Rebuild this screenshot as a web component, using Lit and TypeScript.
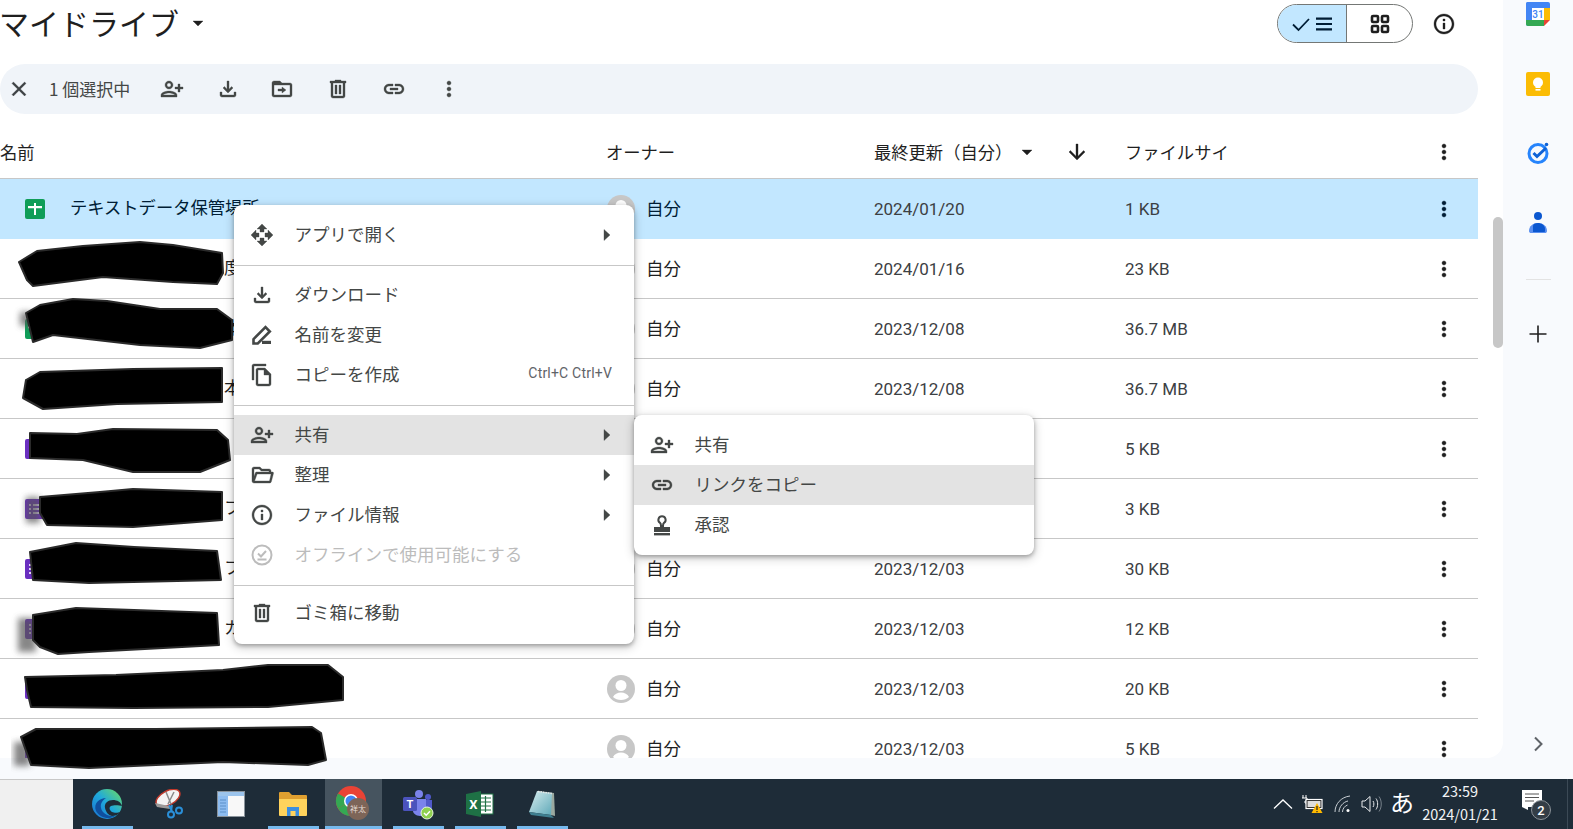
import { LitElement, css, html, svg } from 'lit';
import { customElement } from 'lit/decorators.js';

// material style icon paths
const P = {
  close: 'M19 6.41 17.59 5 12 10.59 6.41 5 5 6.41 10.59 12 5 17.59 6.41 19 12 13.41 17.59 19 19 17.59 13.41 12z',
  personAdd: 'M9 12c2.21 0 4-1.79 4-4s-1.79-4-4-4-4 1.79-4 4 1.79 4 4 4zm0-6c1.1 0 2 .9 2 2s-.9 2-2 2-2-.9-2-2 .9-2 2-2zm0 8c-2.67 0-8 1.34-8 4v2h16v-2c0-2.66-5.33-4-8-4zm6 4H3c.2-.71 3.3-2 6-2 2.69 0 5.78 1.28 6 2zm3-3v-3h-3v-2h3V7h2v3h3v2h-3v3h-2z',
  download: 'M18 15v3H6v-3H4v3c0 1.1.9 2 2 2h12c1.1 0 2-.9 2-2v-3h-2zm-1-4-1.41-1.41L13 12.17V4h-2v8.17L8.41 9.59 7 11l5 5 5-5z',
  move: 'M19 6h-8L9 4H3c-1.1 0-2 .9-2 2v12c0 1.1.9 2 2 2h16c1.1 0 2-.9 2-2V8c0-1.1-.9-2-2-2zm0 12H3V8h16v10zm-8-2 4-3-4-3v2H7v2h4z',
  trash: 'M15 4V3H9v1H4v2h1v13c0 1.1.9 2 2 2h10c1.1 0 2-.9 2-2V6h1V4h-5zm2 15H7V6h10v13zM9 8h2v9H9zm4 0h2v9h-2z',
  link: 'M17 7h-4v2h4c1.65 0 3 1.35 3 3s-1.35 3-3 3h-4v2h4c2.76 0 5-2.24 5-5s-2.24-5-5-5zm-6 8H7c-1.65 0-3-1.35-3-3s1.35-3 3-3h4V7H7c-2.76 0-5 2.24-5 5s2.24 5 5 5h4v-2zm-3-4h8v2H8z',
  more: 'M12 8c1.1 0 2-.9 2-2s-.9-2-2-2-2 .9-2 2 .9 2 2 2zm0 2c-1.1 0-2 .9-2 2s.9 2 2 2 2-.9 2-2-.9-2-2-2zm0 6c-1.1 0-2 .9-2 2s.9 2 2 2 2-.9 2-2-.9-2-2-2z',
  openWith: 'M10 9h4V6h3l-5-5-5 5h3v3zm-1 1H6V7l-5 5 5 5v-3h3v-4zm14 2-5-5v3h-3v4h3v3l5-5zm-9 3h-4v3H7l5 5 5-5h-3v-3z',
  copy: 'M16 1H4c-1.1 0-2 .9-2 2v14h2V3h12V1zm-1 4H8c-1.1 0-2 .9-2 2v14c0 1.1.9 2 2 2h11c1.1 0 2-.9 2-2V11l-6-6zM8 21V7h6v5h5v9H8z',
  folderOpen: 'M4 4h6l2 2h7c1.1 0 2 .9 2 2v1h1.5c.7 0 1.2.7 1 1.3l-2.2 8.4c-.2.8-.9 1.3-1.7 1.3H4c-1.1 0-2-.9-2-2V6c0-1.1.9-2 2-2zm0 2v7.5L5.5 9.6C5.7 9.2 6 9 6.4 9H19V8h-7.8l-2-2H4zm3.1 5L4.6 18h14.9l1.6-7z',
  info: 'M11 7h2v2h-2zm0 4h2v6h-2zm1-9C6.48 2 2 6.48 2 12s4.48 10 10 10 10-4.48 10-10S17.52 2 12 2zm0 18c-4.41 0-8-3.59-8-8s3.59-8 8-8 8 3.59 8 8-3.59 8-8 8z',
  caret: 'M7 10l5 5 5-5z',
  arrowDown: 'M20 12l-1.41-1.41L13 16.17V4h-2v12.17l-5.58-5.59L4 12l8 8 8-8z',
  right: 'M9 6.500v11l6-5.500z',
};

const icon = (d: string, size = 24) => html`<svg class="ic" width=${size} height=${size} viewBox="0 0 24 24"><path d=${d} fill="currentColor" fill-rule="evenodd" stroke="currentColor" stroke-width=".35"></path></svg>`;

const renameIcon = html`<svg class="ic" width="24" height="24" viewBox="0 0 24 24"><path d="M3.500 20.500v-4.300L15.500 4.200l4.300 4.300L7.800 20.500z" fill="none" stroke="currentColor" stroke-width="2.600"></path><rect x="12" y="17.800" width="9" height="3.200" fill="currentColor"></rect></svg>`;
const offlineIcon = html`<svg class="ic" width="24" height="24" viewBox="0 0 24 24" fill="none" stroke="currentColor" stroke-width="2"><circle cx="12" cy="12" r="9.500"></circle><path d="M8 10.500l3 3 5-5.500M7.500 16.500h9"></path></svg>`;
const stampIcon = html`<svg class="ic" width="24" height="24" viewBox="0 0 24 24"><path d="M12 3.200a3.600 3.600 0 0 0-2 6.600c.6.5 1 1.600 1 3.200h2c0-1.600.4-2.700 1-3.200a3.600 3.600 0 0 0-2-6.600z" fill="none" stroke="currentColor" stroke-width="2"></path><rect x="4" y="14" width="16" height="5" fill="currentColor"></rect><rect x="4" y="20" width="16" height="2.400" fill="currentColor"></rect></svg>`;
const avatar = html`<svg class="avatar" width="28" height="28" viewBox="0 0 28 28"><circle cx="14" cy="14" r="14" fill="#c7c7c7"></circle><circle cx="14" cy="10.500" r="5.500" fill="#fff"></circle><path d="M6 22c1.500-3 4.500-4.500 8-4.500s6.500 1.500 8 4.500c-2 2-5 3-8 3s-6-1-8-3z" fill="#fff"></path></svg>`;
const sheetIcon = html`<svg width="20" height="20" viewBox="0 0 20 20"><rect width="20" height="20" rx="2" fill="#0f9d58"></rect><path d="M9 4h2v3h6v2.200h-6V16H9V9.200H3V7h6z" fill="#fff"></path></svg>`;
const formIcon = html`<svg width="20" height="20" viewBox="0 0 20 20"><rect width="20" height="20" rx="2" fill="#6a2fc0"></rect><path d="M4 5h2v2H4zM8 5h8v2H8zM4 9h2v2H4zM8 9h8v2H8zM4 13h2v2H4zM8 13h8v2H8z" fill="#e0d4f5"></path></svg>`;

interface Row { kind: 'sheet' | 'form'; name?: string; tail?: string; date: string; size: string; }
const rows: Row[] = [
  { kind: 'sheet', name: 'テキストデータ保管場所', date: '2024/01/20', size: '1 KB' },
  { kind: 'sheet', tail: '度', date: '2024/01/16', size: '23 KB' },
  { kind: 'sheet', tail: '本', date: '2023/12/08', size: '36.7 MB' },
  { kind: 'sheet', tail: '本', date: '2023/12/08', size: '36.7 MB' },
  { kind: 'form', date: '2023/12/03', size: '5 KB' },
  { kind: 'form', tail: 'フ', date: '2023/12/03', size: '3 KB' },
  { kind: 'form', tail: 'フ', date: '2023/12/03', size: '30 KB' },
  { kind: 'form', tail: 'カ', date: '2023/12/03', size: '12 KB' },
  { kind: 'form', date: '2023/12/03', size: '20 KB' },
  { kind: 'form', date: '2023/12/03', size: '5 KB' },
];

// marker strokes over the file names, traced from the screenshot
const scribbles = [
  '19,262 37,251 83,246 140,242 173,245 222,253 223,273 217,284 173,282 103,277 33,286 27,280',
  '26,313 40,305 73,299 107,301 160,309 217,309 232,320 232,340 200,348 140,345 53,335 33,342',
  '26,380 40,372 133,369 222,368 222,402 117,404 43,409 23,398',
  '30,433 77,434 113,429 217,430 228,440 230,460 200,472 133,472 83,460 30,458',
  '40,497 100,492 133,489 222,492 222,520 133,527 47,525 40,513',
  '30,552 76,543 134,547 217,551 221,580 89,583 33,580',
  '33,615 76,608 134,610 217,613 219,645 89,652 58,654 40,647 33,640',
  '25,677 116,675 223,670 268,665 328,665 343,677 343,700 268,707 134,708 31,707 27,690',
  '21,737 36,729 156,729 312,727 321,733 326,760 308,765 223,762 89,768 31,765',
];

@customElement('app-root')
export class AppRoot extends LitElement {
  static override styles = css`
    :host {
      display: block;
      position: relative;
      width: 100%;
      height: 829px;
      overflow: hidden;
      background: #f8fafd;
      color: #1f1f1f;
      font-family: 'Noto Sans CJK JP', Roboto, sans-serif;
      font-size: 17.300px;
    }
    .ic { display: block; flex: none; }
    .window { display: flex; height: 779px; }
    .main {
      position: relative;
      width: 1503px;
      height: 758px;
      flex: none;
      overflow: hidden;
      background: #fff;
      border-bottom-right-radius: 16px;
    }
    .content { width: 1478px; }
    .top { display: flex; height: 64px; padding-right: 22px; box-sizing: border-box; width: 1478px; }
    .title { font-size: 30px; line-height: 44px; white-space: nowrap; margin-left: -1px; }
    .title-caret { margin: 11px 0 0 7px; color: #1f1f1f; }
    .toggle {
      display: flex;
      margin: 4px 0 0 auto;
      width: 136px;
      height: 39px;
      box-sizing: border-box;
      border: 1px solid #747775;
      border-radius: 20px;
      overflow: hidden;
    }
    .toggle .on {
      width: 68px;
      flex: none;
      display: flex;
      align-items: center;
      justify-content: center;
      gap: 3px;
      background: #c2e7ff;
      border-right: 1px solid #747775;
      color: #001d35;
    }
    .toggle .off { flex: 1; display: flex; align-items: center; justify-content: center; color: #1f1f1f; }
    .info { margin: 12px 0 0 19px; color: #1f1f1f; }
    .toolbar {
      display: flex;
      align-items: center;
      height: 50px;
      border-radius: 25px;
      background: #f0f4f9;
      color: #444746;
    }
    .toolbar .x { margin-left: 7px; color: #3c4043; }
    .toolbar .count { margin-left: 18px; width: 95.500px; white-space: nowrap; font-size: 17px; padding-bottom: 2px; }
    .tool { width: 55.400px; flex: none; display: flex; justify-content: center; }
    .grid { display: grid; grid-template-columns: 606px 268px 251px 285px 68px; align-items: center; }
    .head { height: 53px; padding-top: 11px; border-bottom: 1px solid #c7c7c7; color: #1f1f1f; }
    .head .sort { display: flex; align-items: center; white-space: nowrap; }
    .head .caret { margin-left: 3px; }
    .head .arrow { margin-left: 26px; }
    .head .menu-col { display: flex; justify-content: center; }
    .row { height: 59px; border-bottom: 1px solid #c7c7c7; color: #1f1f1f; }
    .row.sel { background: #c2e7ff; border-bottom-color: #c2e7ff; color: #001d35; }
    .name { display: flex; align-items: center; gap: 25px; padding-left: 25px; white-space: nowrap; }
    .name svg { flex: none; }
    .name span { padding-bottom: 4px; }
    .tail { margin-left: 154px; }
    .owner { display: flex; align-items: center; gap: 11px; padding-left: 1px; }
    .owner span { padding-bottom: 3px; font-size: 17.500px; }
    .avatar { display: block; flex: none; }
    .date, .size { font-family: Roboto, 'Noto Sans CJK JP', sans-serif; font-size: 17px; color: #3c4043; }
    .dots { display: flex; justify-content: center; }
    .scroll { position: absolute; left: 1493px; top: 217px; width: 10px; height: 131px; border-radius: 5px; background: #c7c7c7; }

    .side { flex: 1; position: relative; display: flex; flex-direction: column; align-items: center; }
    .side .cal { margin-top: 2px; height: 24px; }
    .side .keep { margin-top: 46px; height: 24px; }
    .side .tasks { margin-top: 45px; height: 24px; }
    .side .contacts { margin-top: 46px; height: 24px; }
    .side .rule { margin-top: 44px; width: 25px; height: 1px; background: #e3e3e3; }
    .side .plus { margin-top: 42px; color: #1f1f1f; }
    .side .chev { margin-top: auto; margin-bottom: 23px; color: #5f6368; }

    .scribble { position: absolute; left: 0; top: 0; width: 1573px; height: 829px; pointer-events: none; }

    .menu {
      position: absolute;
      width: 400px;
      box-sizing: border-box;
      padding: 10px 0;
      background: #fff;
      border-radius: 8px;
      box-shadow: 0 2px 4px rgba(0, 0, 0, .3), 0 3px 10px 2px rgba(0, 0, 0, .14);
      color: #444746;
      font-size: 17.500px;
    }
    .menu.main-menu { left: 234px; top: 205px; height: 439px; }
    .menu.sub { left: 634px; top: 415px; height: 140px; }
    .item { display: flex; align-items: center; height: 40px; padding-left: 16px; white-space: nowrap; }
    .item.hl { background: #e3e3e3; }
    .item.off { color: #bcbcbc; }
    .item .lbl { margin-left: 20.500px; padding-bottom: 4px; }
    .item .sc { margin-left: auto; margin-right: 22px; padding-bottom: 4px; font-family: Roboto, sans-serif; font-size: 14px; color: #5f6368; letter-spacing: .2px; }
    .item .arr { margin-left: auto; margin-right: 15px; color: #444746; }
    .sep { height: 1px; background: #c7c7c7; margin: 10px 0 9px; }
    .sep.last { margin: 10px 0 7px; }

    .taskbar { display: flex; height: 50px; background: #1e2c38; color: #fff; }
    .start { width: 73px; flex: none; background: #f0f0f0; border-top: 1px solid #c8c8c8; box-sizing: border-box; }
    .apps { display: flex; padding-left: 3px; }
    .slot { position: relative; width: 62px; flex: none; display: flex; align-items: center; justify-content: center; }
    .slot.run::after { content: ''; position: absolute; left: 6px; right: 5px; bottom: 0; height: 3px; background: #76b9ed; }
    .slot.active { background: #46545f; width: 57px; margin: 0 5px 0 1px; }
    .slot.active::after { left: 0; right: 0; }
    .tray { margin: 0 5px 0 auto; display: flex; align-items: center; padding-right: 16px; border-right: 1px solid #3c4a56; }
    .tray svg { display: block; flex: none; }
    .ime { width: 28px; margin-left: 5px; padding-bottom: 4px; text-align: center; font-size: 24px; line-height: 1; }
    .clock { margin-left: -1px; width: 90px; padding-bottom: 4px; text-align: center; font-size: 14.500px; line-height: 23px; color: #f2f4f6; }
    .notify { margin-left: 14px; }
  `;

  private item(ic: unknown, label: string, opts: { arrow?: boolean; hl?: boolean; off?: boolean; sc?: string } = {}) {
    return html`<div class="item ${opts.hl ? 'hl' : ''} ${opts.off ? 'off' : ''}">
      ${ic}<span class="lbl">${label}</span>
      ${opts.sc ? html`<span class="sc">${opts.sc}</span>` : ''}
      ${opts.arrow ? html`<span class="arr">${icon(P.right, 24)}</span>` : ''}
    </div>`;
  }

  private renderSide() {
    return html`<aside class="side">
      <svg class="cal" width="24" height="24" viewBox="0 0 24 24">
        <rect width="24" height="24" rx="2" fill="#fff"></rect>
        <path d="M0 2a2 2 0 0 1 2-2h4v24H2a2 2 0 0 1-2-2z" fill="#4285f4"></path>
        <path d="M2 0h20a2 2 0 0 1 2 2v4H0V2a2 2 0 0 1 2-2z" fill="#4285f4"></path>
        <path d="M18 6h6v12h-6z" fill="#fbbc04"></path>
        <path d="M0 18h18v6H2a2 2 0 0 1-2-2z" fill="#34a853"></path>
        <path d="M18 18h6l-6 6z" fill="#ea4335"></path>
        <text x="12" y="16" text-anchor="middle" font-family="Roboto, sans-serif" font-size="10" font-weight="500" fill="#4285f4">31</text>
      </svg>
      <svg class="keep" width="24" height="24" viewBox="0 0 24 24">
        <rect width="24" height="24" rx="2" fill="#fbbc04"></rect>
        <circle cx="12" cy="10.500" r="5" fill="#fff"></circle>
        <rect x="9.500" y="13" width="5" height="3" fill="#fff"></rect>
        <rect x="9.500" y="17" width="5" height="1.600" fill="#fff"></rect>
      </svg>
      <svg class="tasks" width="24" height="24" viewBox="0 0 24 24">
        <circle cx="12" cy="12.500" r="9" fill="none" stroke="#2684fc" stroke-width="3"></circle>
        <path d="M7.500 12l3.500 3.500 9-8.500" fill="none" stroke="#0f62d6" stroke-width="3"></path>
        <circle cx="20.500" cy="3.500" r="1.800" fill="#0f62d6"></circle>
      </svg>
      <svg class="contacts" width="24" height="24" viewBox="0 0 24 24">
        <circle cx="12" cy="5" r="4" fill="#0b57d0"></circle>
        <path d="M3 20c0-5 4-8 9-8s9 3 9 8c0 1.500-1 2-2 2H5c-1 0-2-.5-2-2z" fill="#5a8ff0"></path>
        <path d="M7 21v-6c0-2 2-3 5-3s7 2 7 6v2c0 .6-.5 1-1 1z" fill="#0b57d0"></path>
      </svg>
      <div class="rule"></div>
      <svg class="plus" width="24" height="24" viewBox="0 0 24 24"><path d="M11.200 3.500h1.600v7.700h7.700v1.600h-7.700v7.700h-1.600v-7.700H3.500v-1.600h7.700z" fill="currentColor"></path></svg>
      <svg class="chev" width="24" height="24" viewBox="0 0 24 24"><path d="M9 5.500l6.500 6.500L9 18.500" fill="none" stroke="currentColor" stroke-width="2"></path></svg>
    </aside>`;
  }

  private renderTaskbar() {
    return html`<footer class="taskbar">
      <div class="start"></div>
      <div class="apps">
        <div class="slot run">
          <svg width="32" height="32" viewBox="0 0 32 32">
            <defs>
              <linearGradient id="eg" x1="0" y1="1" x2="1" y2="0"><stop offset="0" stop-color="#1b6fd0"></stop><stop offset=".5" stop-color="#1fa9dc"></stop><stop offset="1" stop-color="#6fdc5e"></stop></linearGradient>
            </defs>
            <circle cx="16" cy="16" r="15" fill="url(#eg)"></circle>
            <path d="M5 23C2 15 9 10 15 10c-3 2-6 5-5 10 1 5 7 9 14 8-6 4-15 2-19-5z" fill="#0f4f9e"></path>
            <path d="M14 20c-1-5 3-8 8-8 4 0 8 2 9 6-3-1-9-1-11 0-2 1-2 4 1 6 2 1 6 1 8 0-2 3-5 4-8 4-4-1-6-4-7-8z" fill="#1e2c38"></path>
          </svg>
        </div>
        <div class="slot">
          <svg width="30" height="30" viewBox="0 0 30 30">
            <ellipse cx="14" cy="9" rx="13" ry="7" transform="rotate(-28 14 9)" fill="#f3f3f3" stroke="#c0392b" stroke-width="1.500"></ellipse>
            <path d="M12 3l5 12M20 3l-6 12" stroke="#8a8a8a" stroke-width="1.500"></path>
            <path d="M1 14l14 3 1 3-13-2z" fill="#9a9a9a"></path>
            <path d="M15 16l3 6M18 16l-1 6" stroke="#2a8fd8" stroke-width="2"></path>
            <circle cx="17" cy="25.500" r="3" fill="none" stroke="#2a8fd8" stroke-width="2"></circle>
            <circle cx="25" cy="21.500" r="3" fill="none" stroke="#2a8fd8" stroke-width="2"></circle>
          </svg>
        </div>
        <div class="slot">
          <svg width="28" height="26" viewBox="0 0 28 26">
            <rect x="0.500" y="0.500" width="27" height="25" fill="#f8f8f8" stroke="#8a939b"></rect>
            <rect x="1" y="1" width="26" height="4" fill="#9cc4ec"></rect>
            <rect x="1" y="5" width="10" height="20" fill="#8dbcf0"></rect>
            <path d="M3 9h6M3 12h6M3 15h6M3 18h6M3 21h6" stroke="#5b8fc8" stroke-width="1"></path>
          </svg>
        </div>
        <div class="slot run">
          <svg width="28" height="24" viewBox="0 0 28 24">
            <path d="M0 1a1 1 0 0 1 1-1h9l3 3h14a1 1 0 0 1 1 1v4H0z" fill="#e0a030"></path>
            <path d="M0 7h28v16a1 1 0 0 1-1 1H1a1 1 0 0 1-1-1z" fill="#ffd35c"></path>
            <path d="M8 24v-9h12v9h-3.500v-5h-5v5z" fill="#3d8fe0"></path>
          </svg>
        </div>
        <div class="slot run active">
          <svg width="38" height="36" viewBox="0 0 38 36">
            <circle cx="16" cy="15" r="15" fill="#ea4335"></circle>
            <path d="M16 15L3 22.500A15 15 0 0 0 16 30z" fill="#34a853"></path>
            <path d="M16 15V30A15 15 0 0 0 31 15z" fill="#fbbc04"></path>
            <path d="M3 22.500A15 15 0 0 1 3 7.500l13 7.500z" fill="#34a853"></path>
            <circle cx="16" cy="15" r="7" fill="#fff"></circle>
            <circle cx="16" cy="15" r="5.500" fill="#4285f4"></circle>
            <circle cx="23" cy="23" r="11" fill="#7d6558"></circle>
            <text x="23" y="26" text-anchor="middle" font-size="8" fill="#e6dcd4">祥太</text>
          </svg>
        </div>
        <div class="slot run">
          <svg width="32" height="32" viewBox="0 0 32 32">
            <circle cx="17" cy="6" r="4" fill="#7b83eb"></circle>
            <circle cx="26" cy="9" r="3" fill="#5059c9"></circle>
            <path d="M20 12h10v10c0 3-2 5-5 5s-5-2-5-5z" fill="#5059c9"></path>
            <path d="M11 11h13v12c0 3-2 5-6 5s-7-3-7-5z" fill="#7b83eb"></path>
            <rect x="1" y="9" width="14" height="14" rx="1.500" fill="#4b53bc"></rect>
            <text x="8" y="20" text-anchor="middle" font-family="Roboto, sans-serif" font-size="11" font-weight="700" fill="#fff">T</text>
            <circle cx="25" cy="25" r="6" fill="#8fd14f" stroke="#e8f5dc" stroke-width="1"></circle>
            <path d="M22 25l2.200 2.200 3.800-4" fill="none" stroke="#fff" stroke-width="1.500"></path>
          </svg>
        </div>
        <div class="slot run">
          <svg width="28" height="26" viewBox="0 0 28 26">
            <rect x="12" y="3" width="15" height="20" fill="#fff" stroke="#1e7145"></rect>
            <path d="M14 7h11M14 11h11M14 15h11M14 19h11M19.500 5v16" stroke="#1e7145" stroke-width="1.200"></path>
            <path d="M0 3l15-3v26L0 23z" fill="#1e7145"></path>
            <text x="7.500" y="18" text-anchor="middle" font-family="Roboto, sans-serif" font-size="13" font-weight="700" fill="#fff">X</text>
          </svg>
        </div>
        <div class="slot run">
          <svg width="28" height="28" viewBox="0 0 28 28">
            <defs><linearGradient id="np" x1="0" y1="0" x2="1" y2="1"><stop offset="0" stop-color="#d8eef0"></stop><stop offset="1" stop-color="#5fa9b8"></stop></linearGradient></defs>
            <path d="M9 1l17 2 1 23-4-1z" fill="#9aa9a0"></path>
            <path d="M9 1l15 2-1 22L1 22z" fill="url(#np)"></path>
            <path d="M1 22l22 3 3 3L3 25z" fill="#3f7f90"></path>
            <path d="M10 1.500l14 2" stroke="#e8e8e8" stroke-width="1.500" stroke-dasharray="1.500 1"></path>
          </svg>
        </div>
      </div>
      <div class="tray">
        <svg width="20" height="12" viewBox="0 0 20 12"><path d="M1 10.500L10 2l9 8.500" fill="none" stroke="#fff" stroke-width="1.300"></path></svg>
        <svg style="margin-left:9px" width="22" height="20" viewBox="0 0 22 20">
          <path d="M1 1v3M4 1v3M0 4h5v3H3v2h2" fill="none" stroke="#fff" stroke-width="1"></path>
          <rect x="4" y="5.500" width="16" height="9" fill="#222" stroke="#fff" stroke-width="1.200"></rect>
          <rect x="5.500" y="7" width="13" height="6" fill="#ddd"></rect>
          <path d="M15 9l5.500 10h-11z" fill="#ffb900"></path>
          <path d="M15 12v4M15 17v1.200" stroke="#222" stroke-width="1.200"></path>
        </svg>
        <svg style="margin-left:9px" width="20" height="18" viewBox="0 0 20 18" fill="none" stroke="#c8ced3" stroke-width="1">
          <path d="M2 17C2 9 8 2 17 1M6 17c0-5 4-10 9-11M9.500 17c0-3 2-6 5-7"></path><circle cx="15" cy="15.500" r="1.500" fill="#fff" stroke="none"></circle>
        </svg>
        <svg style="margin-left:8px" width="22" height="18" viewBox="0 0 22 18" fill="none" stroke="#e8eaec" stroke-width="1">
          <path d="M1 6h3l5-4.500v15L4 12H1zM12 6c1.200 1.500 1.200 4.500 0 6M15 3.500c2.200 3 2.200 8 0 11"></path><path d="M18 1.500c3 4 3 11 0 15" stroke="#77818a"></path>
        </svg>
        <div class="ime">あ</div>
        <div class="clock"><div>23:59</div><div>2024/01/21</div></div>
        <svg class="notify" width="32" height="32" viewBox="0 0 32 32">
          <rect x="3" y="2" width="20" height="17" fill="#fff"></rect>
          <path d="M6 6h14M6 9.500h14M6 13h9" stroke="#555" stroke-width="1"></path>
          <path d="M3 19h6v3z" fill="#fff"></path>
          <circle cx="22" cy="22" r="9.500" fill="#333d46" stroke="#8a9198" stroke-width="1"></circle>
          <text x="22" y="27" text-anchor="middle" font-family="Roboto, sans-serif" font-size="13" font-weight="500" fill="#fff">2</text>
        </svg>
      </div>
    </footer>`;
  }

  override render() {
    return html`
      <div class="window">
        <main class="main">
          <div class="content">
            <div class="top">
              <span class="title">マイドライブ</span>
              <span class="title-caret">${icon(P.caret)}</span>
              <div class="toggle">
                <div class="on">
                  <svg width="20" height="20" viewBox="0 0 20 20"><path d="M2 10.500l5.500 5.500L18 5" fill="none" stroke="currentColor" stroke-width="1.800"></path></svg>
                  <svg width="20" height="20" viewBox="0 0 20 20"><path d="M2 3.500h16v2.200H2zM2 8.900h16v2.200H2zM2 14.300h16v2.200H2z" fill="currentColor"></path></svg>
                </div>
                <div class="off">
                  <svg width="20" height="20" viewBox="0 0 20 20" fill="none" stroke="currentColor" stroke-width="2.600"><rect x="2" y="2" width="6" height="6" rx="1"></rect><rect x="12" y="2" width="6" height="6" rx="1"></rect><rect x="2" y="12" width="6" height="6" rx="1"></rect><rect x="12" y="12" width="6" height="6" rx="1"></rect></svg>
                </div>
              </div>
              <span class="info">${icon(P.info)}</span>
            </div>
            <div class="toolbar">
              <span class="x">${icon(P.close)}</span>
              <span class="count">1 個選択中</span>
              ${[P.personAdd, P.download, P.move, P.trash, P.link, P.more].map((d) => html`<span class="tool">${icon(d)}</span>`)}
            </div>
            <div class="grid head">
              <span>名前</span>
              <span>オーナー</span>
              <span class="sort">最終更新（自分）<span class="caret">${icon(P.caret)}</span><span class="arrow">${icon(P.arrowDown)}</span></span>
              <span>ファイルサイ</span>
              <span class="menu-col">${icon(P.more)}</span>
            </div>
            ${rows.map((r, i) => html`
              <div class="grid row ${i === 0 ? 'sel' : ''}">
                <span class="name">
                  ${r.kind === 'sheet' ? sheetIcon : formIcon}
                  ${r.name ? html`<span>${r.name}</span>` : r.tail ? html`<span class="tail">${r.tail}</span>` : ''}
                </span>
                <span class="owner">${avatar}<span>自分</span></span>
                <span class="date">${r.date}</span>
                <span class="size">${r.size}</span>
                <span class="dots">${icon(P.more)}</span>
              </div>`)}
          </div>
          <div class="scroll"></div>
        </main>
        ${this.renderSide()}
      </div>
      ${this.renderTaskbar()}

      <svg class="scribble" viewBox="0 0 1573 829">
        <defs><filter id="soft"><feGaussianBlur stdDeviation="3"></feGaussianBlur></filter></defs>
        <g filter="url(#soft)" fill="#555" opacity=".7">
          <rect x="20" y="312" width="12" height="14"></rect>
          <rect x="26" y="497" width="14" height="26"></rect>
          <rect x="18" y="618" width="18" height="34"></rect>
          <rect x="14" y="742" width="16" height="24"></rect>
        </g>
        ${scribbles.map((p) => svg`<polygon points=${p} fill="#000" stroke="#2a2a2a" stroke-width="2" stroke-linejoin="round"></polygon>`)}
      </svg>

      <div class="menu main-menu">
        ${this.item(icon(P.openWith), 'アプリで開く', { arrow: true })}
        <div class="sep"></div>
        ${this.item(icon(P.download), 'ダウンロード')}
        ${this.item(renameIcon, '名前を変更')}
        ${this.item(icon(P.copy), 'コピーを作成', { sc: 'Ctrl+C Ctrl+V' })}
        <div class="sep"></div>
        ${this.item(icon(P.personAdd), '共有', { arrow: true, hl: true })}
        ${this.item(icon(P.folderOpen), '整理', { arrow: true })}
        ${this.item(icon(P.info), 'ファイル情報', { arrow: true })}
        ${this.item(offlineIcon, 'オフラインで使用可能にする', { off: true })}
        <div class="sep last"></div>
        ${this.item(icon(P.trash), 'ゴミ箱に移動')}
      </div>
      <div class="menu sub">
        ${this.item(icon(P.personAdd), '共有')}
        ${this.item(icon(P.link), 'リンクをコピー', { hl: true })}
        ${this.item(stampIcon, '承認')}
      </div>
    `;
  }
}
